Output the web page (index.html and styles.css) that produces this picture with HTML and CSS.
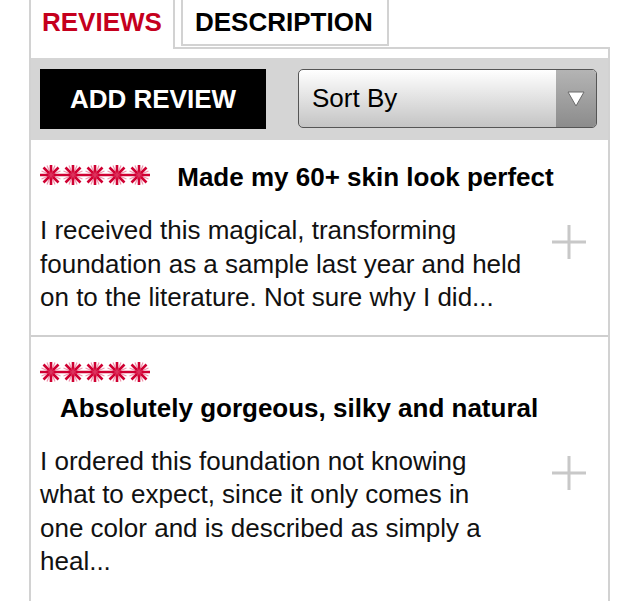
FILE: index.html
```html
<!DOCTYPE html>
<html>
<head>
<meta charset="utf-8">
<link rel="stylesheet" href="styles.css">
</head>
<body>
<div class="panel">
  <div class="tabs">
    <div class="tab tab-active">REVIEWS</div>
    <div class="tab-rest">
      <div class="tab tab-desc">DESCRIPTION</div>
    </div>
  </div>
  <div class="content">
    <div class="toolbar">
      <button class="add-btn">ADD REVIEW</button>
      <div class="select">
        <span class="select-label">Sort By</span>
        <span class="select-arrow">
          <svg width="18" height="16" viewBox="0 0 18 16"><polygon points="1,1 17,1 9,15" fill="#fff" stroke="#6a6a6a" stroke-width="1"/></svg>
        </span>
      </div>
    </div>

    <div class="review">
      <div class="head">
        <svg class="stars" width="110" height="22" viewBox="0 0 110 22"><use href="#stars5"/></svg>
        <h3 class="title">Made my 60+ skin look perfect</h3>
      </div>
      <div class="body">
        <p class="text">I received this magical, transforming<br>foundation as a sample last year and held<br>on to the literature. Not sure why I did...</p>
        <svg class="plus" width="34" height="34" viewBox="0 0 34 34"><path d="M17 0V34M0 17H34" stroke="#c8c8c8" stroke-width="3"/></svg>
      </div>
    </div>

    <div class="review">
      <div class="head">
        <svg class="stars" width="110" height="22" viewBox="0 0 110 22"><use href="#stars5"/></svg>
        <h3 class="title">Absolutely gorgeous, silky and natural</h3>
      </div>
      <div class="body">
        <p class="text">I ordered this foundation not knowing<br>what to expect, since it only comes in<br>one color and is described as simply a<br>heal...</p>
        <svg class="plus" width="34" height="34" viewBox="0 0 34 34"><path d="M17 0V34M0 17H34" stroke="#c8c8c8" stroke-width="3"/></svg>
      </div>
    </div>
  </div>
</div>

<svg width="0" height="0" class="defs">
  <defs>
    <filter id="soft" x="-10%" y="-30%" width="120%" height="160%">
      <feGaussianBlur stdDeviation="0.6"/>
    </filter>
    <g id="star">
      <circle cx="0" cy="0" r="4.5" fill="#cf0030"/>
      <path d="M-11 0H11M0 -10V10M-7.5 -7.5L7.5 7.5M-7.5 7.5L7.5 -7.5" stroke="#cf0030" stroke-width="2.6"/>
      <path d="M-4 -9.5L4 9.5M4 -9.5L-4 9.5M-9.5 -4L9.5 4M-9.5 4L9.5 -4" stroke="#e5507a" stroke-width="1.2" opacity="0.6"/>
    </g>
    <g id="stars5" filter="url(#soft)">
      <use href="#star" x="11" y="11"/>
      <use href="#star" x="33" y="11"/>
      <use href="#star" x="55" y="11"/>
      <use href="#star" x="77" y="11"/>
      <use href="#star" x="99" y="11"/>
    </g>
  </defs>
</svg>
</body>
</html>
```

FILE: styles.css
```css
html, body {
  margin: 0;
  padding: 0;
  background: #fff;
}
body {
  font-family: "Liberation Sans", Arial, Helvetica, sans-serif;
  color: #000;
  height: 601px;
  overflow: hidden;
}
.defs {
  position: absolute;
  width: 0;
  height: 0;
}
.panel {
  margin-left: 29px;
  width: 581px;
  min-height: 601px;
  border-left: 2px solid #d2d2d2;
  box-sizing: border-box;
  display: flex;
  flex-direction: column;
}
.tabs {
  display: flex;
  height: 49px;
  flex: none;
}
.tab {
  font-size: 26px;
  font-weight: bold;
  line-height: 44px;
  box-sizing: border-box;
}
.tab-active {
  width: 144px;
  color: #c5001d;
  padding-left: 11px;
  border-right: 2px solid #d2d2d2;
  height: 49px;
}
.tab-rest {
  flex: 1;
  border-bottom: 2px solid #d2d2d2;
  padding-left: 6px;
}
.tab-desc {
  width: 208px;
  height: 46px;
  padding-left: 12px;
  border: 2px solid #d2d2d2;
  border-top: none;
}
.content {
  flex: 1;
  border-right: 2px solid #d2d2d2;
  padding-top: 9px;
}
.toolbar {
  display: flex;
  align-items: flex-start;
  justify-content: space-between;
  background: #d5d5d5;
  padding: 11px 11px 11px 9px;
}
.add-btn {
  width: 226px;
  height: 60px;
  background: #000;
  color: #fff;
  border: none;
  font-family: "Liberation Sans", Arial, sans-serif;
  font-size: 26px;
  font-weight: bold;
  padding: 0;
  margin: 0;
}
.select {
  width: 299px;
  height: 59px;
  box-sizing: border-box;
  border: 1.5px solid #555;
  border-radius: 5px;
  background: linear-gradient(#ffffff, #c4c4c4);
  display: flex;
  overflow: hidden;
}
.select-label {
  flex: 1;
  font-size: 26px;
  line-height: 56px;
  padding-left: 13px;
}
.select-arrow {
  width: 40px;
  background: linear-gradient(#b4b4b4, #8c8c8c);
  display: flex;
  align-items: center;
  justify-content: center;
}
.review {
  padding: 18px 11px 20px 9px;
}
.review + .review {
  border-top: 2px solid #cfcfcf;
}
.head {
  font-size: 26px;
  line-height: 34px;
}
.stars {
  vertical-align: middle;
  position: relative;
  top: -2px;
}
.title {
  display: inline-block;
  margin: 0 0 0 20px;
  font-size: 26px;
  font-weight: bold;
  line-height: 34px;
  vertical-align: middle;
}
.body {
  display: flex;
  align-items: flex-start;
  margin-top: 20px;
}
.text {
  width: 487px;
  margin: 0;
  font-size: 26px;
  line-height: 33.5px;
  color: #111;
}
.plus {
  margin-left: 25px;
  margin-top: 11px;
  flex: none;
}
```
